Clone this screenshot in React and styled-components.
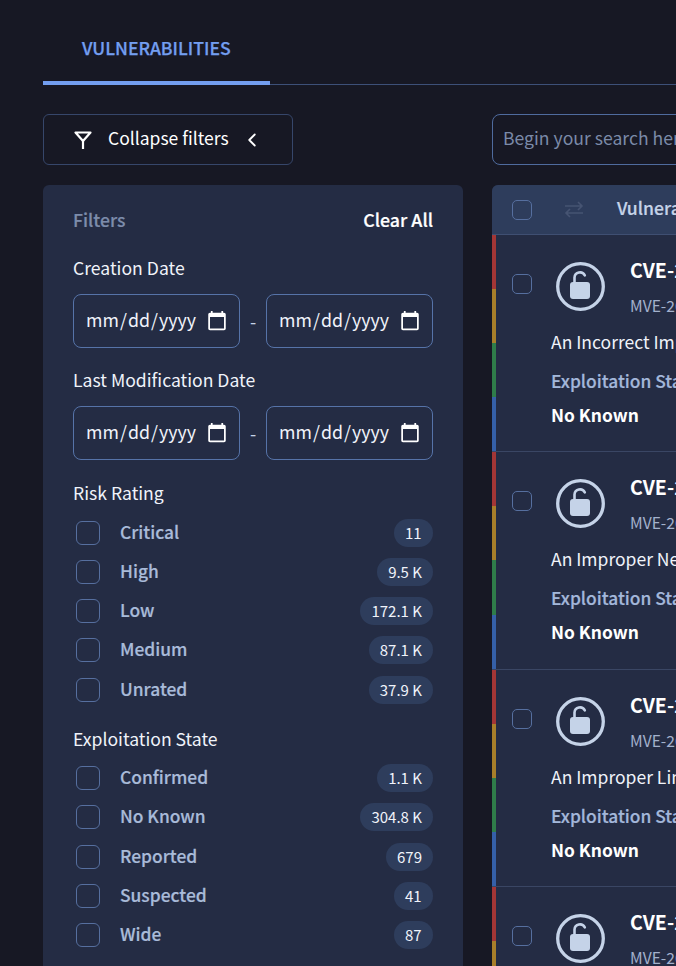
import React from "react";
import styled, { createGlobalStyle } from "styled-components";
import { ChevronLeft } from "lucide-react";

const Global = createGlobalStyle`
  html, body { margin: 0; padding: 0; background: #171824; height: 966px; overflow: hidden; }
  body { font-family: "Noto Sans CJK JP", "Noto Sans", sans-serif; color: #fff; }
  * { box-sizing: border-box; }
`;

const Page = styled.div`
  width: 1400px;
  height: 966px;
  padding: 0 0 0 43px;
  overflow: hidden;
`;
const Tabs = styled.div`
  display: flex;
  height: 85px;
  border-bottom: 1px solid #3d5078;
`;
const Tab = styled.div`
  width: 227px;
  height: 85px;
  padding: 35px 0 0 39px;
  border-bottom: 4px solid #739ef0;
  color: #739ef0;
  font-size: 17.6px;
  line-height: 26px;
  font-weight: 500;
  -webkit-text-stroke: 0.25px #739ef0;
`;
const Columns = styled.div`
  display: grid;
  grid-template-columns: 420px 1fr;
  column-gap: 29px;
  padding-top: 29px;
`;
const LeftCol = styled.div`
  display: flex;
  flex-direction: column;
  gap: 20px;
`;
const RightCol = styled.div`
  display: flex;
  flex-direction: column;
  gap: 20px;
`;
const CollapseButton = styled.button`
  width: 250px;
  height: 51px;
  display: flex;
  align-items: center;
  padding: 0 0 0 30px;
  gap: 16px;
  background: transparent;
  border: 1px solid #36466a;
  border-radius: 6px;
  color: #fff;
  font: 400 17.5px/26px "Noto Sans CJK JP", sans-serif;
`;
const CollapseLabel = styled.span`
  padding-bottom: 4px;
`;
const SearchInput = styled.input`
  width: 600px;
  height: 51px;
  padding: 0 10px 4px;
  background: transparent;
  border: 1px solid #4f6b9e;
  border-radius: 8px;
  font: 400 17.6px/26px "Noto Sans CJK JP", sans-serif;
  color: #fff;
  &::placeholder { color: #7b8aa8; opacity: 1; }
`;
const Panel = styled.aside`
  background: #242c44;
  border-radius: 6px 6px 0 0;
  padding: 20px 30px 30px;
`;
const PanelHead = styled.div`
  display: flex;
  justify-content: space-between;
  align-items: center;
  height: 28px;
  margin-bottom: 22px;
`;
const PanelTitle = styled.span`
  color: #7d8cab;
  font-size: 17.6px;
  font-weight: 500;
  -webkit-text-stroke: 0.2px #7d8cab;
`;
const ClearAll = styled.span`
  color: #fff;
  font-size: 17.8px;
  font-weight: 500;
  -webkit-text-stroke: 0.2px #fff;
`;
const SectionLabel = styled.div`
  color: #f0f3fa;
  font-size: 17.6px;
  line-height: 26px;
  margin-bottom: ${p => (p.$tight ? 12.5 : 13)}px;
`;
const DateRow = styled.div`
  display: grid;
  grid-template-columns: 167px 1fr 167px;
  align-items: center;
  margin-bottom: ${p => p.$after}px;
`;
const Dash = styled.span`
  text-align: center;
  color: #c5d3e8;
  font-size: 18px;
`;
const DateInput = styled.input.attrs({ type: "date" })`
  color-scheme: dark;
  width: 167px;
  height: 54px;
  padding: 0 11px 4px;
  background: transparent;
  border: 1px solid #5673a8;
  border-radius: 8px;
  color: #f0f3fa;
  font: 400 17.8px "Noto Sans CJK JP", sans-serif;
  &::-webkit-calendar-picker-indicator {
    width: 22px;
    height: 22px;
    margin: 4px 0 0 0;
    padding: 0;
  }
`;
const FacetList = styled.ul`
  list-style: none;
  margin: 0 0 ${p => p.$after}px;
  padding: 0;
  display: flex;
  flex-direction: column;
  gap: 11.25px;
`;
const Facet = styled.li`
  display: flex;
  align-items: center;
  height: 28px;
  padding-left: 3px;
`;
const Check = styled.input.attrs({ type: "checkbox" })`
  appearance: none;
  margin: 0;
  flex: none;
  width: ${p => p.$size}px;
  height: ${p => p.$size}px;
  background: transparent;
  border: 1px solid #566f9f;
  border-radius: ${p => (p.$size > 20 ? 6 : 5)}px;
`;
const FacetName = styled.span`
  margin-left: 20px;
  padding-bottom: 3px;
  flex: 1;
  color: #a9bbd9;
  font-size: 17.4px;
  font-weight: 500;
  -webkit-text-stroke: 0.2px #a9bbd9;
`;
const Count = styled.span`
  height: 28px;
  padding: 0 11px;
  min-width: 39px;
  border-radius: 14px;
  background: #2e3d5c;
  color: #f0f3fa;
  font-size: 15px;
  line-height: 27px;
`;
const Table = styled.section`
  background: #242c44;
  border-radius: 6px 6px 0 0;
  overflow: hidden;
`;
const TableHead = styled.div`
  display: flex;
  align-items: center;
  height: 50px;
  padding-left: 20px;
  background: #2e3d5c;
  border-bottom: 1px solid #3f4f72;
`;
const HeadTitle = styled.span`
  margin-left: 33px;
  padding-bottom: 4px;
  color: #c5d3e8;
  font-size: 17.6px;
  font-weight: 500;
  -webkit-text-stroke: 0.2px #c5d3e8;
`;
const SwapIcon = styled.svg`
  margin-left: 32px;
  width: 20px;
  height: 18px;
  flex: none;
`;
const Row = styled.article`
  display: flex;
  height: 217.3px;
  border-bottom: 1px solid #3a4664;
`;
const Stripe = styled.div`
  width: 4px;
  flex: none;
  display: flex;
  flex-direction: column;
`;
const StripePart = styled.i`
  flex: 1;
  background: ${p => p.$color};
`;
const RowBody = styled.div`
  padding: 39px 0 0 16px;
  display: flex;
  flex-direction: column;
`;
const RowTop = styled.div`
  display: flex;
  align-items: flex-start;
`;
const LockWrap = styled.div`
  margin: -12px 0 0 24px;
  width: 49px;
  height: 49px;
  flex: none;
`;
const Ids = styled.div`
  margin: -18px 0 0 25px;
`;
const CveId = styled.div`
  font-size: 19.6px;
  line-height: 28px;
  font-weight: 700;
  white-space: nowrap;
`;
const MveId = styled.div`
  margin-top: 10px;
  color: #a3b1cc;
  font-size: 15.6px;
  line-height: 22px;
  white-space: nowrap;
`;
const Desc = styled.div`
  margin: 13px 0 0 39px;
  font-size: 17.5px;
  line-height: 26px;
  color: #f0f3fa;
  white-space: nowrap;
`;
const StateLabel = styled.div`
  margin: 13px 0 0 39px;
  color: #a3b7da;
  font-size: 17.4px;
  line-height: 26px;
  font-weight: 500;
  -webkit-text-stroke: 0.2px #a3b7da;
  white-space: nowrap;
`;
const StateValue = styled.div`
  margin: 8px 0 0 39px;
  font-size: 17.4px;
  line-height: 26px;
  font-weight: 700;
`;
const FunnelIcon = () => (
  <svg width="18" height="18" viewBox="0 0 18 18" fill="none" stroke="#fff" strokeWidth="2.2">
    <path d="M1.5 1.5h15L9 10z" strokeLinejoin="round" />
    <path d="M9 9.5V18" />
  </svg>
);
const LockIcon = () => (
  <svg width="49" height="49" viewBox="0 0 49 49" fill="none">
    <circle cx="24.5" cy="24.5" r="22.8" stroke="#c5d3e8" strokeWidth="3.3" />
    <rect x="14" y="20" width="20" height="17" rx="3" fill="#c5d3e8" />
    <path d="M18.5 21v-5.5a5.5 5.5 0 0 1 10.3 -2.2" stroke="#c5d3e8" strokeWidth="2.6" strokeLinecap="round" />
  </svg>
);

const risk = [["Critical", "11"], ["High", "9.5 K"], ["Low", "172.1 K"], ["Medium", "87.1 K"], ["Unrated", "37.9 K"]];
const state = [["Confirmed", "1.1 K"], ["No Known", "304.8 K"], ["Reported", "679"], ["Suspected", "41"], ["Wide", "87"]];
const rows = [
  ["CVE-2024-21410", "MVE-2024-0001", "An Incorrect Implementation"],
  ["CVE-2024-21411", "MVE-2024-0002", "An Improper Neutralization"],
  ["CVE-2024-21412", "MVE-2024-0003", "An Improper Limitation"],
  ["CVE-2024-21413", "MVE-2024-0004", "An Improper Input"],
];
const stripes = ["#a33636", "#a87f2a", "#2f7d4a", "#3560a8"];

const Facets = ({ items, after }) => (
  <FacetList $after={after}>
    {items.map(([n, c]) => (
      <Facet key={n}>
        <Check $size={24} />
        <FacetName>{n}</FacetName>
        <Count>{c}</Count>
      </Facet>
    ))}
  </FacetList>
);
const Dates = ({ after }) => (
  <DateRow $after={after}>
    <DateInput />
    <Dash>-</Dash>
    <DateInput />
  </DateRow>
);

export default function App() {
  return (
    <Page>
      <Global />
      <Tabs><Tab>VULNERABILITIES</Tab></Tabs>
      <Columns>
        <LeftCol>
          <CollapseButton>
            <FunnelIcon />
            <CollapseLabel>Collapse filters</CollapseLabel>
            <ChevronLeft size={22} color="#fff" strokeWidth={2} style={{ marginLeft: -4 }} />
          </CollapseButton>
          <Panel>
            <PanelHead><PanelTitle>Filters</PanelTitle><ClearAll>Clear All</ClearAll></PanelHead>
            <SectionLabel>Creation Date</SectionLabel>
            <Dates after={19} />
            <SectionLabel>Last Modification Date</SectionLabel>
            <Dates after={20} />
            <SectionLabel $tight>Risk Rating</SectionLabel>
            <Facets items={risk} after={22} />
            <SectionLabel $tight>Exploitation State</SectionLabel>
            <Facets items={state} after={0} />
          </Panel>
        </LeftCol>
        <RightCol>
          <SearchInput placeholder="Begin your search here" />
          <Table>
            <TableHead>
              <Check $size={20} />
              <SwapIcon viewBox="0 0 20 18" fill="none" stroke="#465472" strokeWidth="1.6">
                <path d="M1 5h17M14 1l4 4-4 4" />
                <path d="M19 12H2M6 8l-4 4 4 4" />
              </SwapIcon>
              <HeadTitle>Vulnerability</HeadTitle>
            </TableHead>
            {rows.map(r => (
              <Row key={r[0]}>
                <Stripe>{stripes.map(c => <StripePart key={c} $color={c} />)}</Stripe>
                <RowBody>
                  <RowTop>
                    <Check $size={20} />
                    <LockWrap><LockIcon /></LockWrap>
                    <Ids><CveId>{r[0]}</CveId><MveId>{r[1]}</MveId></Ids>
                  </RowTop>
                  <Desc>{r[2]}</Desc>
                  <StateLabel>Exploitation State</StateLabel>
                  <StateValue>No Known</StateValue>
                </RowBody>
              </Row>
            ))}
          </Table>
        </RightCol>
      </Columns>
    </Page>
  );
}
